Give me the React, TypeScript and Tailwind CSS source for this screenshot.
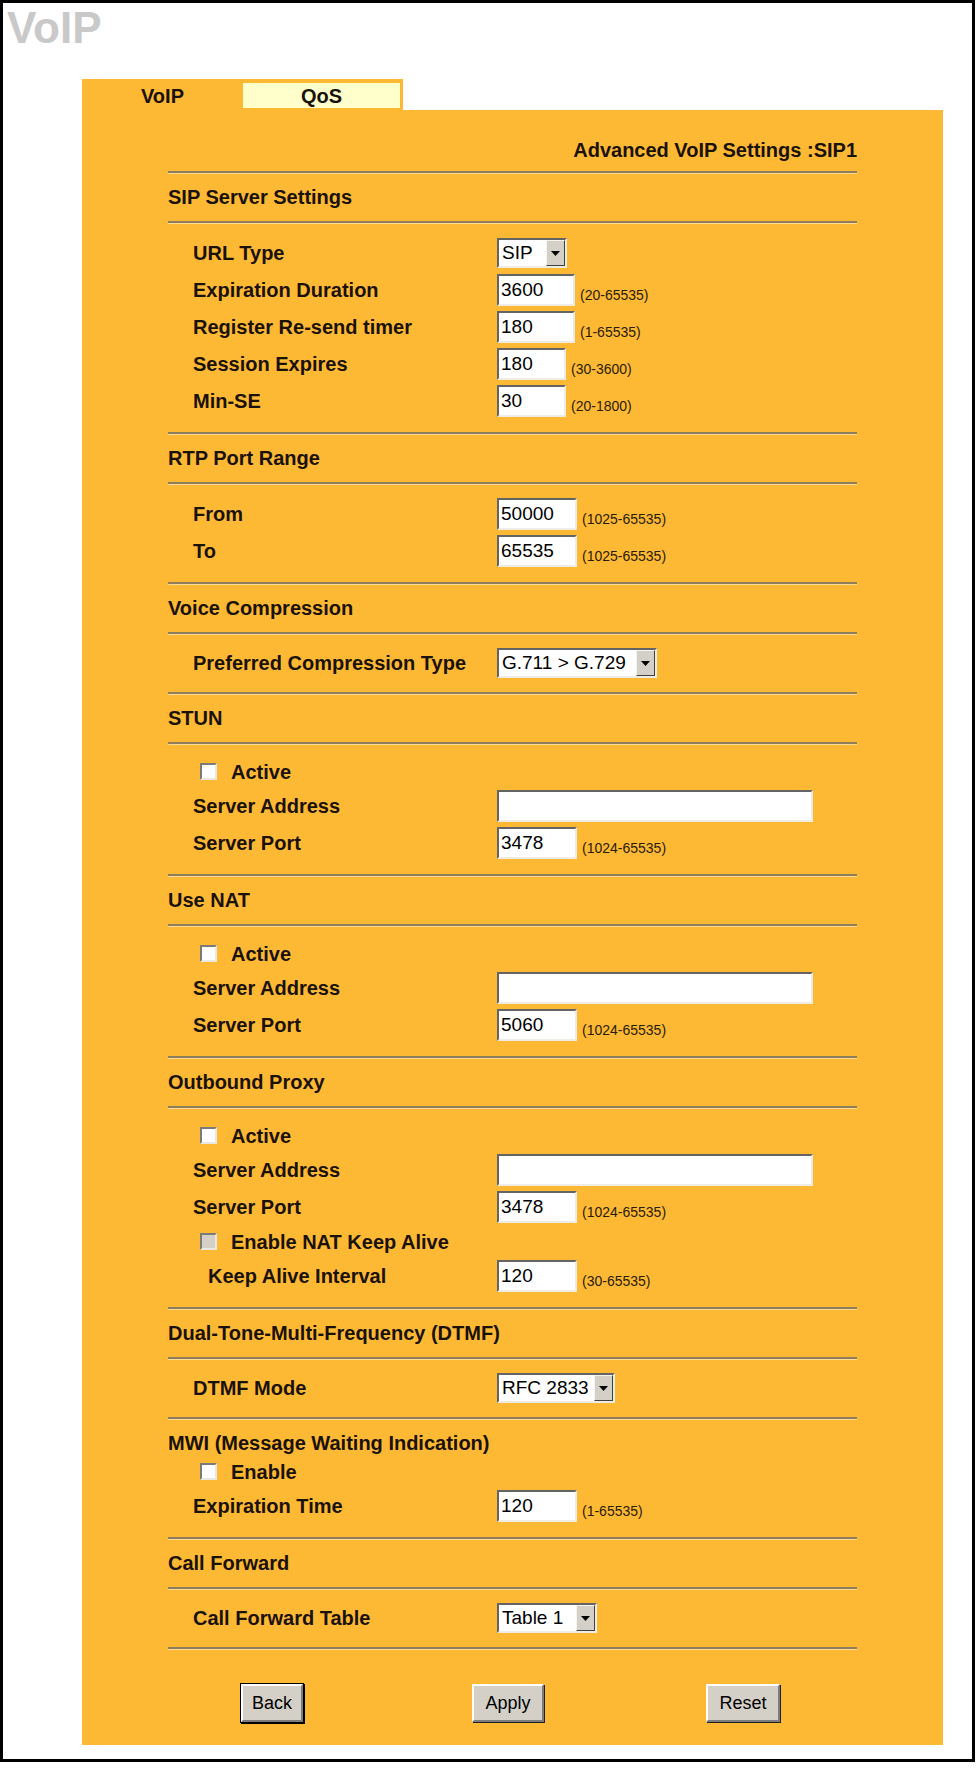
import React from "react";

// Advanced VoIP settings (SIP1) page of the router's web configurator.

const inset =
  "border-2 border-t-[#646464] border-l-[#646464] border-r-[#efece6] border-b-[#efece6]";

function Rule() {
  return <div className="h-[3px] border-t-2 border-b border-t-[#8e7e5c] border-b-[#ffdc95]" />;
}

function Heading({ children }: { children: React.ReactNode }) {
  return <div className="pt-[11px] pb-[12px] text-[20px] leading-[24px] font-bold">{children}</div>;
}

function Rows({
  children,
  top = "pt-[13px]",
  bottom = "pb-[15px]",
}: {
  children: React.ReactNode;
  top?: string;
  bottom?: string;
}) {
  return <div className={`${top} ${bottom} flex flex-col gap-[5px]`}>{children}</div>;
}

function Row({
  label,
  indent,
  height = "h-[32px]",
  children,
}: {
  label: string;
  indent?: boolean;
  height?: string;
  children: React.ReactNode;
}) {
  return (
    <div className={`flex items-center ${height}`}>
      <div
        className={`w-[329px] shrink-0 font-bold text-[20px] leading-[24px] ${
          indent ? "pl-[40px]" : "pl-[25px]"
        }`}
      >
        {label}
      </div>
      {children}
    </div>
  );
}

function TextBox({ value = "", width }: { value?: string; width: string }) {
  return (
    <input
      readOnly
      value={value}
      className={`${width} h-[32px] bg-white ${inset} pl-[2px] text-[19px] text-black outline-none`}
    />
  );
}

function Range({ children }: { children: React.ReactNode }) {
  return (
    <span className="self-end mb-[3px] ml-[5px] text-[14px] leading-[16px] text-[#2a1b06]">
      {children}
    </span>
  );
}

function Dropdown({ value, width }: { value: string; width: string }) {
  return (
    <div className={`${width} h-[30px] flex bg-white ${inset}`}>
      <span className="flex-1 pl-[3px] text-[19px] leading-[26px] whitespace-nowrap overflow-hidden text-black">
        {value}
      </span>
      <span className="w-[19px] h-full bg-[#d4d0c8] border border-t-[#f6f4f0] border-l-[#f6f4f0] border-r-[#404040] border-b-[#404040] flex items-center justify-center">
        <svg width="9" height="5" viewBox="0 0 9 5">
          <path d="M0 0h9L4.5 5z" fill="#000" />
        </svg>
      </span>
    </div>
  );
}

function CheckRow({ label, disabled }: { label: string; disabled?: boolean }) {
  return (
    <div className="flex items-center h-[27px] pl-[32px] gap-[14px]">
      <span
        className={`w-[17px] h-[17px] border-2 border-t-[#7b7b7b] border-l-[#7b7b7b] border-r-[#ebe8e2] border-b-[#ebe8e2] ${
          disabled ? "bg-[#d4d0c8]" : "bg-white"
        }`}
      />
      <span className="font-bold text-[20px] leading-[24px]">{label}</span>
    </div>
  );
}

function PushButton({
  children,
  className,
  isDefault,
}: {
  children: React.ReactNode;
  className: string;
  isDefault?: boolean;
}) {
  return (
    <button
      className={`${className} h-[38px] bg-[#d4d0c8] text-[18px] text-black border-2 border-t-white border-l-white border-r-[#7c7c7c] border-b-[#7c7c7c] ${
        isDefault ? "shadow-[0_0_0_1px_#000,1px_1px_0_1px_#000]" : "shadow-[1px_1px_0_0_#202020]"
      }`}
    >
      {children}
    </button>
  );
}

function ServerBlock({ port, keepAlive }: { port: string; keepAlive?: boolean }) {
  return (
    <Rows>
      <CheckRow label="Active" />
      <Row label="Server Address">
        <TextBox width="w-[316px]" />
      </Row>
      <Row label="Server Port">
        <TextBox value={port} width="w-[80px]" />
        <Range>(1024-65535)</Range>
      </Row>
      {keepAlive && (
        <>
          <CheckRow label="Enable NAT Keep Alive" disabled />
          <Row label="Keep Alive Interval" indent>
            <TextBox value="120" width="w-[80px]" />
            <Range>(30-65535)</Range>
          </Row>
        </>
      )}
    </Rows>
  );
}

// a section holding a single drop-down row
function SelectSection({ label, value, width }: { label: string; value: string; width: string }) {
  return (
    <Rows bottom="pb-[14px]">
      <Row label={label} height="h-[30px]">
        <Dropdown value={value} width={width} />
      </Row>
    </Rows>
  );
}

export default function App() {
  return (
    <div className="w-[978px] h-[1771px] bg-white font-['Liberation_Sans',Arial,Helvetica,sans-serif] text-[#1a1108]">
      <div className="w-[975px] h-[1762px] border-[3px] border-black">
        <h1 className="mt-[3px] pl-[4px] h-[44px] text-[44px] leading-[44px] font-bold text-[#c9c9c9]">
          VoIP
        </h1>

        <div className="ml-[79px] mt-[29px] w-[861px]">
          {/* tab strip */}
          <div className="flex h-[31px]">
            <div className="w-[161px] bg-[#feb934] flex items-center justify-center pt-[3px] font-bold text-[20px]">
              VoIP
            </div>
            <div className="w-[160px] bg-[#feb934] pt-[4px] pr-[3px] pb-[2px]">
              <div className="h-full bg-[#ffffcc] flex items-center justify-center font-bold text-[20px]">
                QoS
              </div>
            </div>
          </div>

          <div className="h-[1635px] bg-[#feb934] pl-[86px]">
            <div className="w-[689px]">
              <div className="pt-[28px] pb-[9px] text-right font-bold text-[20px] leading-[24px]">
                Advanced VoIP Settings :SIP1
              </div>

              <Rule />
              <Heading>SIP Server Settings</Heading>
              <Rule />
              <Rows>
                <Row label="URL Type">
                  <Dropdown value="SIP" width="w-[70px]" />
                </Row>
                <Row label="Expiration Duration">
                  <TextBox value="3600" width="w-[78px]" />
                  <Range>(20-65535)</Range>
                </Row>
                <Row label="Register Re-send timer">
                  <TextBox value="180" width="w-[78px]" />
                  <Range>(1-65535)</Range>
                </Row>
                <Row label="Session Expires">
                  <TextBox value="180" width="w-[69px]" />
                  <Range>(30-3600)</Range>
                </Row>
                <Row label="Min-SE">
                  <TextBox value="30" width="w-[69px]" />
                  <Range>(20-1800)</Range>
                </Row>
              </Rows>

              <Rule />
              <Heading>RTP Port Range</Heading>
              <Rule />
              <Rows>
                <Row label="From">
                  <TextBox value="50000" width="w-[80px]" />
                  <Range>(1025-65535)</Range>
                </Row>
                <Row label="To">
                  <TextBox value="65535" width="w-[80px]" />
                  <Range>(1025-65535)</Range>
                </Row>
              </Rows>

              <Rule />
              <Heading>Voice Compression</Heading>
              <Rule />
              <SelectSection label="Preferred Compression Type" value="G.711 > G.729" width="w-[160px]" />

              <Rule />
              <Heading>STUN</Heading>
              <Rule />
              <ServerBlock port="3478" />

              <Rule />
              <Heading>Use NAT</Heading>
              <Rule />
              <ServerBlock port="5060" />

              <Rule />
              <Heading>Outbound Proxy</Heading>
              <Rule />
              <ServerBlock port="3478" keepAlive />

              <Rule />
              <Heading>Dual-Tone-Multi-Frequency (DTMF)</Heading>
              <Rule />
              <SelectSection label="DTMF Mode" value="RFC 2833" width="w-[118px]" />

              <Rule />
              <div className="pt-[11px] text-[20px] leading-[24px] font-bold">
                MWI (Message Waiting Indication)
              </div>
              <Rows top="pt-[3px]">
                <CheckRow label="Enable" />
                <Row label="Expiration Time">
                  <TextBox value="120" width="w-[80px]" />
                  <Range>(1-65535)</Range>
                </Row>
              </Rows>

              <Rule />
              <Heading>Call Forward</Heading>
              <Rule />
              <SelectSection label="Call Forward Table" value="Table 1" width="w-[100px]" />
              <Rule />

              <div className="pt-[34px] pl-[73px] flex">
                <PushButton className="w-[62px]" isDefault>
                  Back
                </PushButton>
                <PushButton className="w-[72px] ml-[169px]">Apply</PushButton>
                <PushButton className="w-[74px] ml-[162px]">Reset</PushButton>
              </div>
            </div>
          </div>
        </div>
      </div>
    </div>
  );
}
